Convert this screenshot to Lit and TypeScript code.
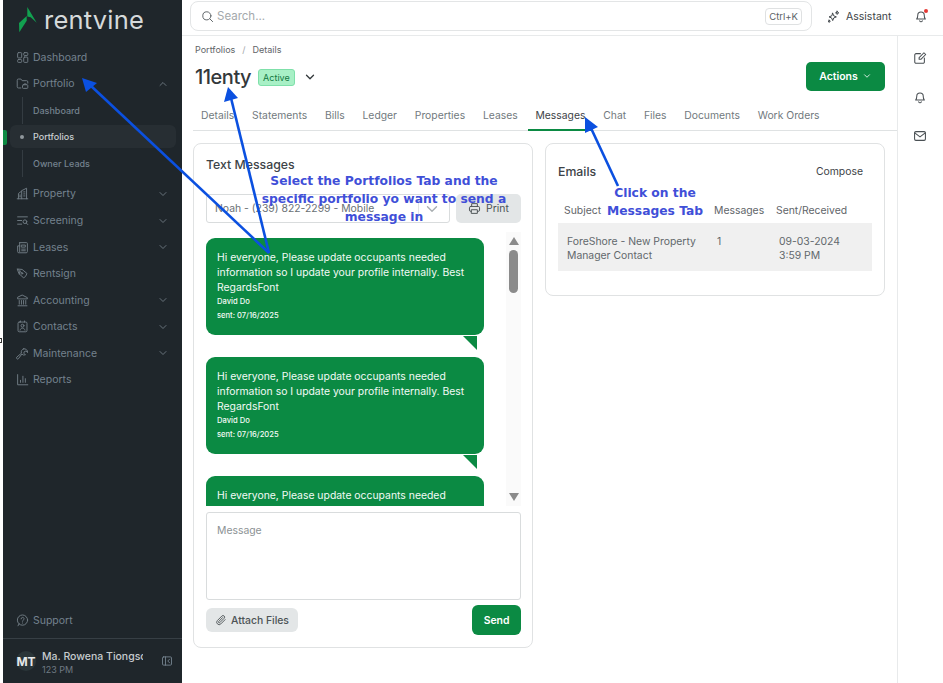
import { css, html, LitElement, nothing, svg } from 'lit';
import { customElement } from 'lit/decorators.js';

const icons: Record<string, unknown> = {
  dashboard: svg`<rect x="2" y="2" width="5" height="6.5" rx="1"/><rect x="9.5" y="2" width="5" height="3.5" rx="1"/><rect x="2" y="10.5" width="5" height="3.5" rx="1"/><rect x="9.5" y="7.5" width="5" height="6.5" rx="1"/>`,
  portfolio: svg`<path d="M6 13.5H3a1.5 1.5 0 0 1-1.5-1.5V4A1.5 1.5 0 0 1 3 2.500h3l1.500 2H13A1.500 1.500 0 0 1 14.500 6v1.500"/><rect x="8" y="9.500" width="6.500" height="4.500" rx="1"/><path d="M10 9.500V8.500h2.500v1"/>`,
  property: svg`<path d="M1.500 14.500h13M3 14.500V8l4-3v9.500M7 4.500l6-3v13"/><path d="M9.500 6h1.500M9.500 8.500h1.500M9.500 11h1.500M4.500 10h1M4.500 12h1"/>`,
  screening: svg`<path d="M2 3.500h12M2 8h5M2 12.500h5"/><circle cx="11" cy="9.500" r="2.300"/><path d="M12.700 11.200l1.800 1.800"/>`,
  leases: svg`<path d="M4.500 2h8.500a1 1 0 0 1 1 1v10a1.500 1.500 0 0 1-1.500 1.500H3.500A1.500 1.500 0 0 1 2 13V6h2.500"/><path d="M4.500 2v11"/><path d="M7 5h4.500v2.500H7zM7 10h4.500M7 12h4.500"/>`,
  rentsign: svg`<path d="M2 2.500l5.500.5 6 5-1.500 3-2.500 2.500-5.500-5z"/><path d="M2 2.500l4.500 4.500"/><circle cx="7.300" cy="7.800" r="1"/><path d="M5 4.800L4 8.500"/>`,
  accounting: svg`<path d="M8 1.500l6 3v1.500H2V4.500zM2.500 14.500h11M4 8v4.500M6.700 8v4.500M9.300 8v4.500M12 8v4.500"/>`,
  contacts: svg`<rect x="2.500" y="2.500" width="11" height="12" rx="1.500"/><path d="M5.500 1.200v1.300M10.500 1.200v1.300"/><circle cx="8" cy="7" r="1.800"/><path d="M5 12.500c.5-1.800 1.600-2.500 3-2.500s2.500.7 3 2.500"/>`,
  maintenance: svg`<path d="M9.500 1.800a4 4 0 0 1 4.700 4.700l-2-2-2 .8-.6 1.900 2 2a4 4 0 0 1-4.400-.9L3 14a1.400 1.400 0 0 1-2-2l5.700-4.800a4 4 0 0 1 2.800-5.400z" transform="translate(0 .4)"/>`,
  reports: svg`<path d="M2 2v12.500h12.500"/><path d="M5.500 11.500V9M8.500 11.500V4M11.500 11.500V7"/>`,
  support: svg`<circle cx="8" cy="7.500" r="6.300"/><path d="M2.500 14.500l1.300-2.500"/><path d="M6.300 6a1.800 1.800 0 1 1 2.600 1.600c-.6.300-.9.700-.9 1.300M8 11v.2"/>`,
  collapse: svg`<rect x="2" y="2.500" width="12" height="11" rx="1.500"/><path d="M6 2.500v11M11.500 5.500L9 8l2.500 2.500"/>`,
  search: svg`<circle cx="7.200" cy="7.200" r="5"/><path d="M11 11l3.300 3.300"/>`,
  sparkle: svg`<path d="M7 4l1.300 3.200L11.500 8.500 8.300 9.800 7 13 5.700 9.800 2.500 8.500l3.200-1.300zM12.500 1.500l.6 1.400 1.400.6-1.400.6-.6 1.400-.6-1.400-1.400-.6 1.400-.6zM2.700 12.500l.4 1 1 .4-1 .4-.4 1-.4-1-1-.4 1-.4z"/>`,
  bell: svg`<path d="M3 11.500c1-1 1.300-2 1.300-4.300a3.700 3.700 0 0 1 7.400 0c0 2.300.3 3.300 1.300 4.300z"/><path d="M6.500 13.500a1.600 1.600 0 0 0 3 0"/>`,
  edit: svg`<path d="M8.500 3H3.500A1.500 1.500 0 0 0 2 4.500v8A1.500 1.500 0 0 0 3.500 14h8a1.500 1.500 0 0 0 1.500-1.500V8"/><path d="M7 9.500V7.500L12.500 2l2 2L9 9.500z"/>`,
  mail: svg`<rect x="1.800" y="3" width="12.400" height="10" rx="1.500"/><path d="M2 4.500l6 4.500 6-4.500"/>`,
  print: svg`<path d="M4.500 5.500V2h7v3.500"/><rect x="1.800" y="5.500" width="12.400" height="6" rx="1.500"/><rect x="4.500" y="9.500" width="7" height="4.500" fill="#e3e6e7"/>`,
  clip: svg`<path d="M13.500 7.500l-5.700 5.700a3.200 3.200 0 0 1-4.600-4.500l6-6a2.100 2.100 0 0 1 3 3l-5.800 5.800a1 1 0 0 1-1.500-1.500l5.200-5.200"/>`,
  down: svg`<path d="M4 6l4 4 4-4"/>`,
  up: svg`<path d="M4 10l4-4 4 4"/>`,
};

const icon = (name: string, size = 14, cls = '') =>
  html`<svg class="ic ${cls}" width=${size} height=${size} viewBox="0 0 16 16">${icons[name]}</svg>`;

const navTop = [
  { label: 'Property', icon: 'property', more: true },
  { label: 'Screening', icon: 'screening', more: true },
  { label: 'Leases', icon: 'leases', more: true },
  { label: 'Rentsign', icon: 'rentsign', more: false },
  { label: 'Accounting', icon: 'accounting', more: true },
  { label: 'Contacts', icon: 'contacts', more: true },
  { label: 'Maintenance', icon: 'maintenance', more: true },
  { label: 'Reports', icon: 'reports', more: false },
];

const tabs = ['Details', 'Statements', 'Bills', 'Ledger', 'Properties', 'Leases', 'Messages', 'Chat', 'Files', 'Documents', 'Work Orders'];

@customElement('app-root')
export class AppRoot extends LitElement {
  static styles = css`
    :host {
      display: block;
      position: relative;
      width: 943px;
      height: 683px;
      overflow: hidden;
      background: #fff;
      font-family: Inter, "Liberation Sans", sans-serif;
      color: #3d4347;
    }
    .ic { fill: none; stroke: currentColor; stroke-width: 1.2; stroke-linecap: round; stroke-linejoin: round; flex: none; display: block; }
    .app { display: flex; height: 683px; padding-left: 3px; box-sizing: border-box; }

    /* sidebar */
    .side { width: 179px; flex: none; background: #1f262b; display: flex; flex-direction: column; color: #74828e; font-size: 10.500px; position: relative; }
    .logo { height: 44px; display: flex; align-items: center; gap: 6px; padding: 0 0 4px 15px; box-sizing: border-box; }
    .logo span { font-family: Inter, sans-serif; font-size: 25.500px; color: #d5d9da; line-height: 30px; letter-spacing: 0.2px; }
    .item { height: 26.550px; display: flex; align-items: center; padding: 0 13px; gap: 4px; flex: none; }
    .item .lbl { flex: 1; }
    .item .ic { color: #6f7a83; }
    .sub { padding-bottom: 4px; }
    .sub .item { padding-left: 30px; font-size: 9px; position: relative; font-weight: 500; color: #74828e; }
    .sub .item.line::before { content: ''; position: absolute; left: 19px; top: 0; bottom: 0; width: 1px; background: #343c42; }
    .sub .item.active { margin: 1.775px 6px 1.775px 7px; padding-left: 23px; height: 23px; background: #272e33; border-radius: 6px; color: #c9ced2; }
    .sub .item.active::before { content: ''; position: absolute; left: 10px; top: 9.500px; width: 4px; height: 4px; border-radius: 50%; background: #8f979c; }
    .sub .item.active::after { content: ''; position: absolute; left: -7px; top: 5px; width: 4px; height: 15px; background: #0d8a43; border-radius: 0 2px 2px 0; }
    .spacer { flex: 1; }
    .support { margin-bottom: 4px; }
    .foot { height: 45px; border-top: 1px solid #373f45; display: flex; align-items: center; padding: 0 15px 0 13px; gap: 6px; box-sizing: border-box; }
    .avatar { width: 20px; height: 20px; border-radius: 50%; background: #2b3639; color: #e6e9ea; font-weight: 700; font-size: 12px; display: flex; align-items: center; justify-content: center; flex: none; }
    .who { width: 101px; flex: none; overflow: hidden; white-space: nowrap; margin-right: 12px; padding-top: 4px; }
    .who b { display: block; font-weight: 500; font-size: 10.500px; color: #c6cbce; line-height: 14px; }
    .who i { display: block; font-style: normal; font-size: 9px; color: #6f7a83; line-height: 12px; }

    /* main */
    .main { flex: 1; min-width: 0; display: flex; flex-direction: column; }
    .top { height: 36px; box-sizing: border-box; border-bottom: 1px solid #e8eaeb; display: flex; align-items: flex-start; padding: 1px 0 0 8px; flex: none; }
    .search { width: 622px; height: 30px; box-sizing: border-box; border: 1px solid #e3e5e6; border-radius: 8px; display: flex; align-items: center; padding: 0 9px 0 10px; gap: 3px; color: #a4a9ac; font-size: 11.500px; }
    .search .ic { color: #5e6467; }
    .search .txt { flex: 1; }
    .kbd { border: 1px solid #dfe1e2; border-radius: 4px; font-size: 9.500px; color: #5c6266; padding: 2px 3px; line-height: 11px; }
    .assist { display: flex; align-items: center; gap: 6px; margin-left: 15px; font-size: 10.500px; color: #3d4347; height: 30px; }
    .bell { position: relative; margin-left: 23px; height: 30px; display: flex; align-items: center; color: #4a5054; }
    .bell::after { content: ''; position: absolute; right: 0; top: 8px; width: 4px; height: 4px; border-radius: 50%; background: #e53935; }
    .body { flex: 1; display: flex; min-height: 0; }
    .content { width: 715px; flex: none; box-sizing: border-box; padding-left: 11px; }
    .rail { flex: 1; border-left: 1px solid #e8eaeb; display: flex; flex-direction: column; align-items: center; padding-top: 15px; gap: 25px; color: #4a5054; padding-right: 2px; }
    .crumb { font-size: 9px; color: #5f6569; padding: 8px 0 0 2px; line-height: 11px; display: flex; gap: 7px; }
    .crumb em { font-style: normal; color: #a3a8ab; }
    .head { display: flex; align-items: center; height: 38px; margin-top: 3px; padding: 0 12px 0 2px; }
    h1 { margin: 0; font-size: 20px; font-weight: 500; color: #33383b; letter-spacing: -0.5px; line-height: 30px; }
    .badge { margin-left: 7px; background: #a8f0c6; border: 1px solid #7fe0aa; color: #11773f; border-radius: 3px; font-size: 9px; line-height: 15px; padding: 0 4px; }
    .head .ic { margin-left: 8px; color: #33383b; stroke-width: 1.5; }
    .actions { margin-left: auto; width: 79px; height: 29px; background: #0b8a43; color: #fff; border-radius: 5px; font-size: 10.500px; font-weight: 600; display: flex; align-items: center; justify-content: center; gap: 4px; margin-top: -2px; }
    .head .actions .ic { margin-left: 0; color: #fff; stroke-width: 1.300; }
    .tabs { display: flex; height: 28px; box-sizing: border-box; margin-top: 7px; border-bottom: 1px solid #dfe2e3; gap: 3.800px; padding-left: 1px; }
    .tab { padding: 0 7px; font-size: 10.350px; line-height: 24px; color: #727a7e; height: 28px; box-sizing: border-box; white-space: nowrap; }
    .tab.on { color: #3d4347; border-bottom: 2px solid #0b8a43; }
    .cards { display: flex; gap: 12px; align-items: flex-start; margin-top: 12px; width: 692px; }
    .card { width: 340px; box-sizing: border-box; border: 1px solid #e0e2e3; border-radius: 8px; background: #fff; }
    .text { height: 505px; padding: 0 11px 0 12px; }
    .text h2 { margin: 13px 0 0; font-size: 12.300px; font-weight: 500; line-height: 15px; color: #3d4347; }
    .pick { display: flex; gap: 6px; margin-top: 22px; }
    .select { width: 244px; height: 29px; box-sizing: border-box; border: 1px solid #d9dcdd; border-radius: 3px; display: flex; align-items: center; padding: 0 8px; font-size: 10.400px; color: #6a7074; }
    .select span { flex: 1; }
    .select .ic { color: #a9aeb1; padding-left: 4px; border-left: 1px solid #e3e5e6; height: 18px; width: 18px; }
    .print { width: 65px; height: 29px; border-radius: 5px; background: #e3e6e7; display: flex; align-items: center; justify-content: center; gap: 5px; font-size: 10.400px; color: #4d5356; }
    .thread { display: flex; height: 274px; margin-top: 9px; gap: 22px; }
    .msgs { width: 278px; overflow: hidden; padding-top: 6px; box-sizing: border-box; flex: none; }
    .msg { position: relative; background: #0b8a43; color: #f3faf6; border-radius: 9px; height: 97px; box-sizing: border-box; padding: 12px 11px 0; margin-bottom: 22px; font-size: 10.400px; line-height: 15px; }
    .msg small { display: block; font-size: 7.600px; line-height: 14px; font-weight: 500; }
    .msg::after { content: ''; position: absolute; right: 7px; top: 98px; width: 14px; height: 14px; background: #0b8a43; clip-path: polygon(0 0, 100% 0, 100% 100%); }
    .bar { width: 15px; background: #fafafa; position: relative; display: flex; flex-direction: column; align-items: center; padding-top: 5px; box-sizing: border-box; flex: none; }
    .tri { width: 0; height: 0; border-left: 5px solid transparent; border-right: 5px solid transparent; border-bottom: 8px solid #8b8b8b; }
    .tri.dn { border-bottom: 0; border-top: 8px solid #8b8b8b; margin-top: auto; margin-bottom: 5px; }
    .thumb { width: 9px; height: 43px; background: #8b8b8b; border-radius: 5px; margin-top: 5px; }
    .area { height: 88px; box-sizing: border-box; border: 1px solid #d9dcdd; border-radius: 3px; margin-top: 6px; padding: 10px 10px; font-size: 10.400px; color: #8c9295; line-height: 15px; }
    .send-row { display: flex; align-items: center; justify-content: space-between; margin-top: 5px; }
    .attach { width: 92px; height: 24px; border-radius: 6px; background: #e3e6e7; display: flex; align-items: center; justify-content: center; gap: 4px; font-size: 10.400px; font-weight: 500; color: #4d5356; }
    .send { width: 49px; height: 30px; border-radius: 6px; background: #0b8a43; color: #fff; font-weight: 600; font-size: 10.400px; display: flex; align-items: center; justify-content: center; }
    .emails { height: 153px; padding: 0 12px; }
    .em-head { display: flex; justify-content: space-between; align-items: center; height: 15px; margin-top: 20px; padding-right: 9px; font-size: 10.400px; color: #3d4347; }
    .em-head h2 { margin: 0; font-size: 12.300px; font-weight: 500; }
    .tbl { margin-top: 25px; font-size: 10.400px; color: #5f6569; width: 314px; }
    .hd, .rw { display: grid; }
    .hd { line-height: 14px; padding: 0 0 5px 6px; grid-template-columns: 150px 62px 96px; }
    .rw { background: #f0f0f0; padding: 12px 0 8px 9px; line-height: 14px; grid-template-columns: 150px 62px 93px; color: #62686c; }

    /* annotations over the page */
    .anno { position: absolute; left: 0; top: 0; pointer-events: none; }
    .note { position: absolute; font-family: "DejaVu Sans", sans-serif; font-weight: 700; color: #3f4fd8; font-size: 12.300px; line-height: 18px; text-align: center; white-space: nowrap; transform: translateX(-50%); }
    .note.a { left: 384px; top: 172px; }
    .note.b { left: 655px; top: 184px; }
    .edge { position: absolute; left: 0; top: 338px; width: 2px; height: 5px; border: 1px solid #333; border-left: 0; box-sizing: border-box; }
  `;

  private renderItem(label: string, ic: string, more: boolean, open = false) {
    return html`<div class="item">
      ${icon(ic, 13)}<span class="lbl">${label}</span>
      ${more ? icon(open ? 'up' : 'down', 12) : nothing}
    </div>`;
  }

  private renderMsg() {
    return html`<div class="msg">
      Hi everyone, Please update occupants needed information so I update your profile internally. Best RegardsFont
      <small>David Do</small>
      <small>sent: 07/16/2025</small>
    </div>`;
  }

  render() {
    return html`
      <div class="app">
        <aside class="side">
          <div class="logo">
            <svg width="20" height="26" viewBox="0 0 20 26">
              <path d="M9.300 0L18.700 15.700 12.700 10.300 9.300 9.500z" fill="#12a150"/>
              <path d="M8.700 9L1 16 1.300 25.300 8.700 13.700z" fill="#12a150"/>
            </svg>
            <span>rentvine</span>
          </div>
          ${this.renderItem('Dashboard', 'dashboard', false)}
          ${this.renderItem('Portfolio', 'portfolio', true, true)}
          <div class="sub">
            <div class="item line">Dashboard</div>
            <div class="item active">Portfolios</div>
            <div class="item line">Owner Leads</div>
          </div>
          ${navTop.map((n) => this.renderItem(n.label, n.icon, n.more))}
          <div class="spacer"></div>
          <div class="item support">${icon('support', 13)}<span class="lbl">Support</span></div>
          <div class="foot">
            <div class="avatar">MT</div>
            <div class="who"><b>Ma. Rowena Tiongson</b><i>123 PM</i></div>
            ${icon('collapse', 12)}
          </div>
        </aside>

        <div class="main">
          <div class="top">
            <div class="search">
              ${icon('search', 13)}<span class="txt">Search...</span><span class="kbd">Ctrl+K</span>
            </div>
            <div class="assist">${icon('sparkle', 13)}<span>Assistant</span></div>
            <div class="bell">${icon('bell', 14)}</div>
          </div>
          <div class="body">
            <div class="content">
              <div class="crumb"><span>Portfolios</span><em>/</em><span>Details</span></div>
              <div class="head">
                <h1>11enty</h1>
                <span class="badge">Active</span>
                ${icon('down', 14)}
                <div class="actions">Actions ${icon('down', 10)}</div>
              </div>
              <div class="tabs">
                ${tabs.map((t) => html`<div class="tab ${t === 'Messages' ? 'on' : ''}">${t}</div>`)}
              </div>
              <div class="cards">
                <section class="card text">
                  <h2>Text Messages</h2>
                  <div class="pick">
                    <div class="select"><span>Noah - (239) 822-2299 - Mobile</span>${icon('down', 14)}</div>
                    <div class="print">${icon('print', 13)}Print</div>
                  </div>
                  <div class="thread">
                    <div class="msgs">${this.renderMsg()}${this.renderMsg()}${this.renderMsg()}</div>
                    <div class="bar"><div class="tri"></div><div class="thumb"></div><div class="tri dn"></div></div>
                  </div>
                  <div class="area">Message</div>
                  <div class="send-row">
                    <div class="attach">${icon('clip', 12)}Attach Files</div>
                    <div class="send">Send</div>
                  </div>
                </section>
                <section class="card emails">
                  <div class="em-head"><h2>Emails</h2><span>Compose</span></div>
                  <div class="tbl">
                    <div class="hd"><span>Subject</span><span>Messages</span><span>Sent/Received</span></div>
                    <div class="rw">
                      <span>ForeShore - New Property Manager Contact</span>
                      <span>1</span>
                      <span>09-03-2024<br />3:59 PM</span>
                    </div>
                  </div>
                </section>
              </div>
            </div>
            <div class="rail">${icon('edit', 14)}${icon('bell', 14)}${icon('mail', 14)}</div>
          </div>
        </div>
      </div>

      <div class="edge"></div>
      <svg class="anno" width="943" height="683" viewBox="0 0 943 683">
        <g stroke="#0b50e0" stroke-width="2.600" fill="none">
          <path d="M269 253L90 85"/>
          <path d="M269 253L231 98"/>
          <path d="M618 186L590 126"/>
        </g>
        <g fill="#0b50e0">
          <path d="M82 78L97 83 86 92z"/>
          <path d="M228 87L238 98 224 102z"/>
          <path d="M585 117L598 127 585 133z"/>
        </g>
      </svg>
      <div class="note a">Select the Portfolios Tab and the<br />specific portfolio yo want to send a<br />message in</div>
      <div class="note b">Click on the<br />Messages Tab</div>
    `;
  }
}
